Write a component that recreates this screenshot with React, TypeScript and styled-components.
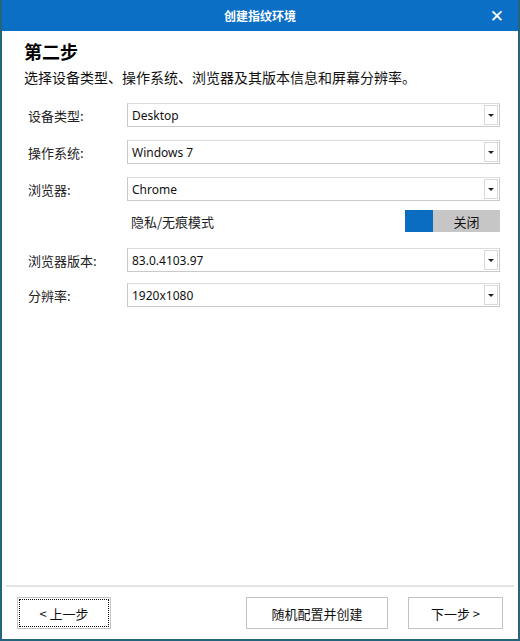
import React, { useState } from 'react';
import styled, { createGlobalStyle } from 'styled-components';

const GlobalStyle = createGlobalStyle`
  html, body {
    margin: 0;
    padding: 0;
    background: #fff;
  }
  body {
    font-family: "Noto Sans", "Noto Sans CJK SC", sans-serif;
  }
`

const Frame = styled.div`
  width: 520px;
  height: 641px;
  box-sizing: border-box;
  display: flex;
  flex-direction: column;
  border-left: 2px solid #24657c;
  border-right: 2px solid #24657c;
  border-bottom: 2px solid #24657c;
  background: #fff;
`

const TitleBar = styled.div`
  height: 31px;
  flex-shrink: 0;
  background: #0b6fc5;
  display: flex;
  align-items: center;
  justify-content: center;
  position: relative;
  color: #fff;
  font-family: "Noto Sans CJK SC", sans-serif;
  font-size: 12px;
  font-weight: 700;
  .close {
    position: absolute;
    right: 14px;
    top: 6px;
    font-size: 17px;
    font-weight: 700;
    font-family: "DejaVu Sans", sans-serif;
    line-height: 20px;
  }
`

const Body = styled.div`
  flex: 1;
  padding: 8px 18px 0 22px;
  display: flex;
  flex-direction: column;
`

const Heading = styled.div`
  font-family: "Noto Sans CJK SC", sans-serif;
  font-size: 18px;
  font-weight: 700;
  color: #000;
  line-height: 24px;
  margin-bottom: 4px;
`

const Subtitle = styled.div`
  font-family: "Noto Sans CJK SC", sans-serif;
  font-size: 14px;
  color: #111;
  line-height: 20px;
  margin-bottom: 16px;
`

const Form = styled.div`
  display: flex;
  flex-direction: column;
`

const Row = styled.div<{ gap?: number }>`
  display: flex;
  align-items: center;
  height: 24px;
  margin-bottom: ${p => p.gap ?? 13}px;
`

const Label = styled.div`
  width: 103px;
  padding-left: 4px;
  box-sizing: border-box;
  font-family: "Noto Sans CJK SC", sans-serif;
  font-size: 13px;
  color: #222;
`

const SelectBox = styled.div`
  flex: 1;
  height: 24px;
  box-sizing: border-box;
  border: 1px solid #c9c9c9;
  border-top-color: #dcdcdc;
  display: flex;
  align-items: center;
  justify-content: space-between;
  padding-left: 4px;
  font-family: "Segoe UI", "Noto Sans", "Open Sans", sans-serif;
  font-size: 12px;
  color: #111;
`

const Arrow = styled.div`
  width: 14px;
  height: 20px;
  margin-right: 1px;
  border: 1px solid #d8d8d8;
  box-sizing: border-box;
  display: flex;
  align-items: center;
  justify-content: center;
  &::after {
    content: '';
    border-left: 3px solid transparent;
    border-right: 3px solid transparent;
    border-top: 3px solid #222;
  }
`

const ToggleRow = styled.div`
  display: flex;
  align-items: center;
  justify-content: space-between;
  height: 24px;
  margin: -2px 0 15px 107px;
  font-family: "Noto Sans CJK SC", sans-serif;
  font-size: 13px;
  color: #222;
`

const Toggle = styled.div`
  display: flex;
  width: 95px;
  height: 22px;
  cursor: pointer;
`

const Knob = styled.div`
  width: 28px;
  background: #0b6dc2;
`

const Track = styled.div`
  flex: 1;
  background: #c6c6c6;
  display: flex;
  align-items: center;
  justify-content: center;
  font-family: "Noto Sans CJK SC", sans-serif;
  font-size: 13px;
  color: #111;
`

const Footer = styled.div`
  flex-shrink: 0;
  height: 52px;
  border-top: 2px solid #e4e4e4;
  margin: 0 4px;
  display: flex;
  align-items: center;
  padding: 0 11px 0 11px;
  gap: 20px;
`

const Button = styled.button<{ focused?: boolean; width: number }>`
  width: ${p => p.width}px;
  height: 32px;
  box-sizing: border-box;
  background: #fff;
  border: 1px solid #c2c2c2;
  font-family: "Noto Sans CJK SC", sans-serif;
  font-size: 13px;
  color: #111;
  cursor: pointer;
  outline: ${p => (p.focused ? '1px dotted #111' : 'none')};
  outline-offset: -3px;
`

const Spacer = styled.div`
  flex: 1;
`

const fields = [
  { label: '设备类型:', value: 'Desktop' },
  { label: '操作系统:', value: 'Windows 7' },
  { label: '浏览器:', value: 'Chrome' },
]

const fields2 = [
  { label: '浏览器版本:', value: '83.0.4103.97' },
  { label: '分辨率:', value: '1920x1080' },
]

function App() {
  const [incognito, setIncognito] = useState<boolean>(false)

  return (<Frame>
    <GlobalStyle />
    <TitleBar>
      <span>创建指纹环境</span>
      <span className='close'>✕</span>
    </TitleBar>
    <Body>
      <Heading>第二步</Heading>
      <Subtitle>选择设备类型、操作系统、浏览器及其版本信息和屏幕分辨率。</Subtitle>
      <Form>
        {fields.map((item, i) => (
          <Row key={item.label} gap={i === fields.length - 1 ? 10 : 13}>
            <Label>{item.label}</Label>
            <SelectBox>
              <span>{item.value}</span>
              <Arrow />
            </SelectBox>
          </Row>
        ))}
        <ToggleRow>
          <span>隐私/无痕模式</span>
          <Toggle onClick={() => setIncognito(!incognito)}>
            <Knob />
            <Track>{incognito ? '开启' : '关闭'}</Track>
          </Toggle>
        </ToggleRow>
        {fields2.map(item => (
          <Row key={item.label} gap={11}>
            <Label>{item.label}</Label>
            <SelectBox>
              <span>{item.value}</span>
              <Arrow />
            </SelectBox>
          </Row>
        ))}
      </Form>
    </Body>
    <Footer>
      <Button width={94} focused>&lt; 上一步</Button>
      <Spacer />
      <Button width={142}>随机配置并创建</Button>
      <Button width={95}>下一步 &gt;</Button>
    </Footer>
  </Frame>);
}

export default App;
